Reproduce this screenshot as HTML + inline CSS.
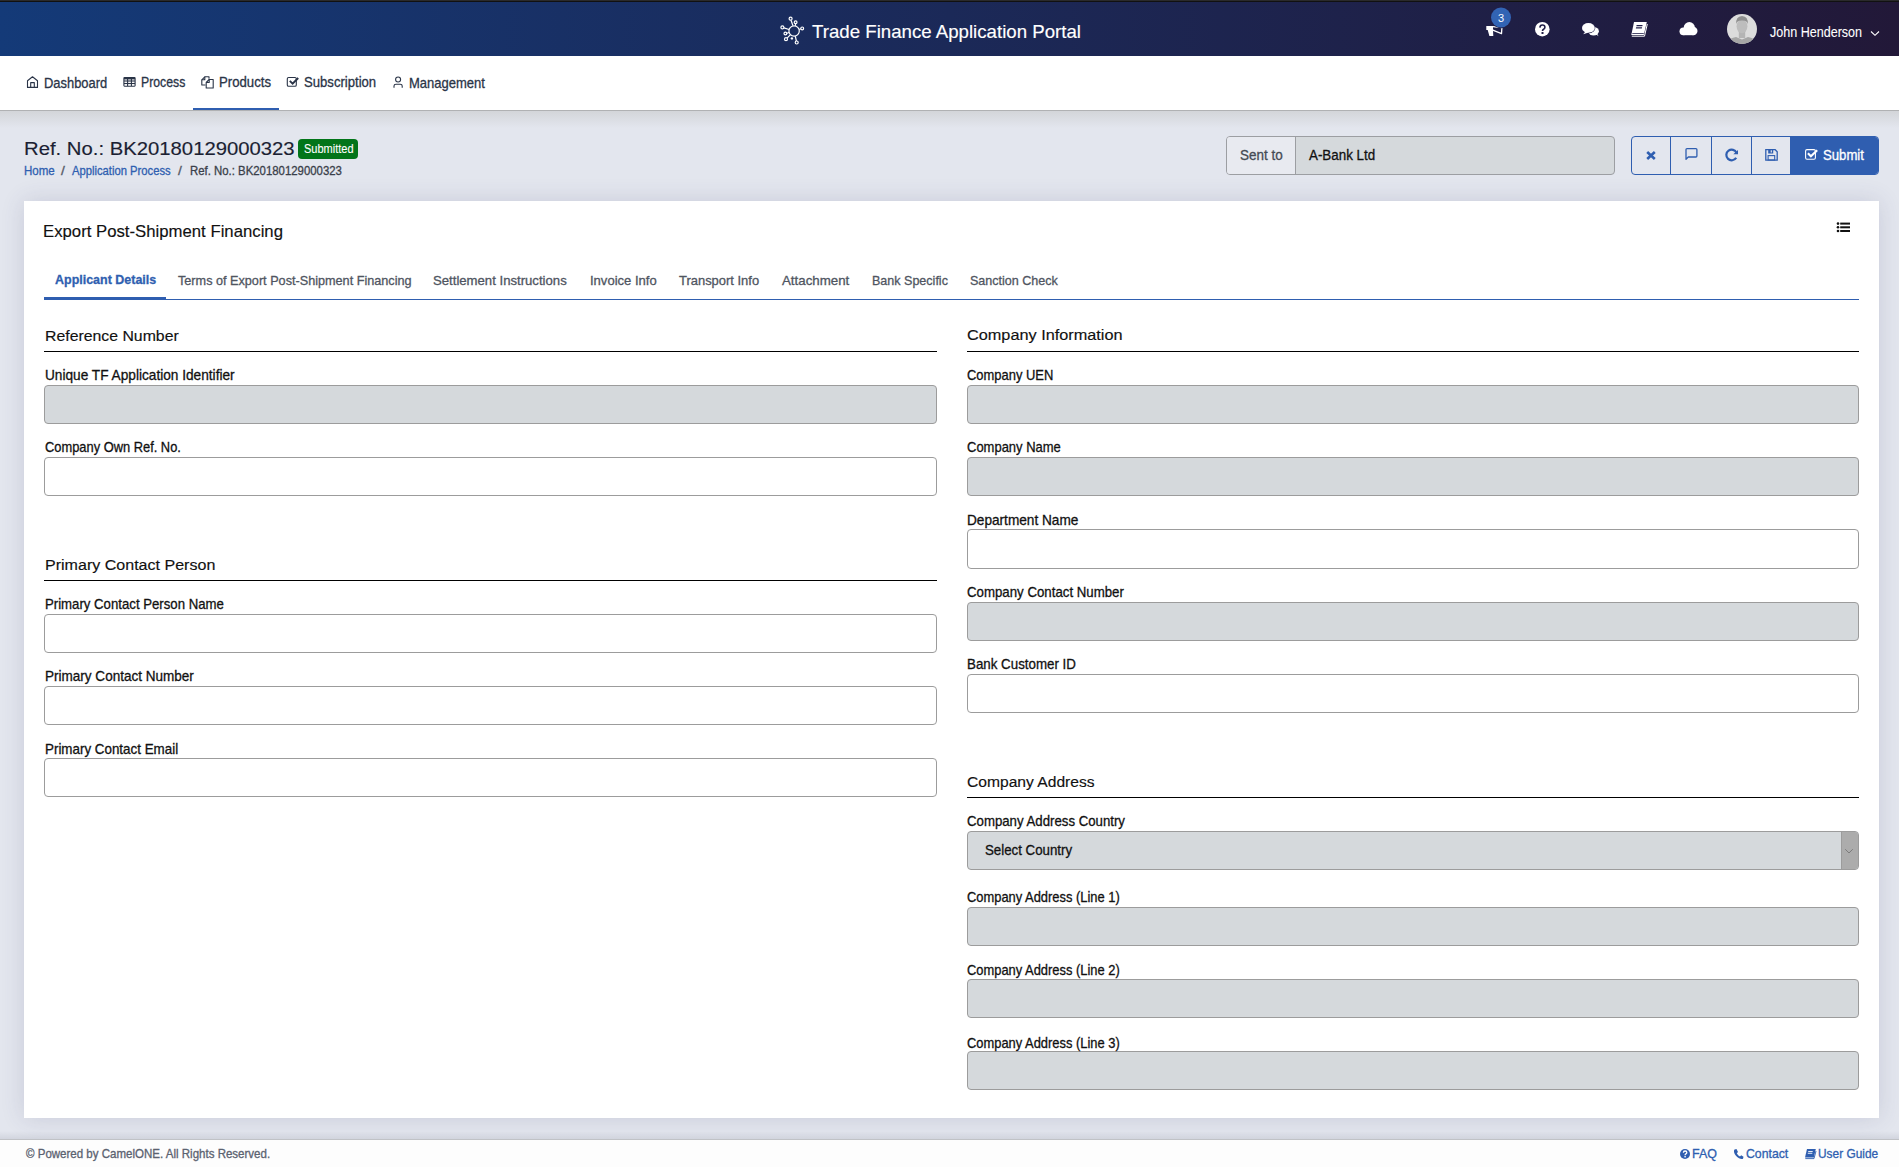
<!DOCTYPE html>
<html><head><meta charset="utf-8">
<style>
*{box-sizing:border-box;margin:0;padding:0}
html,body{width:1899px;height:1167px;overflow:hidden;background:#e3e6ee;font-family:"Liberation Sans",sans-serif}
.a{position:absolute}
.t{position:absolute;white-space:nowrap;line-height:1;transform-origin:0 0;-webkit-text-stroke:0.3px currentColor;font-family:"Liberation Sans",sans-serif}
#hdr{left:0;top:0;width:1899px;height:56px;background:linear-gradient(to right,#143a78,#221838);border-top:2px solid #111}
#hdrtop{left:0;top:0;width:1899px;height:1px;background:#2a2a2b}
#nav{left:0;top:56px;width:1899px;height:55px;background:#fff;border-bottom:1px solid #b0b1b3}
#navsh{left:0;top:111px;width:1899px;height:17px;background:linear-gradient(#d3d5d9,rgba(227,230,238,0))}
#card{left:24px;top:201px;width:1855px;height:917px;background:#fff;box-shadow:0 0 22px rgba(60,64,110,0.16)}
#foot{left:0;top:1139px;width:1899px;height:28px;background:#fdfdfd;border-top:1px solid #c0c2c6}
.inp{position:absolute;height:39px;border:1px solid #9c9c9c;border-radius:4px;background:#fff}
.dis{background:#d5d9dc}
.hr{position:absolute;height:1px;background:#000}
</style></head><body>
<div class="a" id="hdr"></div>
<div class="a" id="hdrtop"></div>
<div class="a" id="nav"></div>
<div class="a" id="navsh"></div>
<div class="a" style="left:193px;top:108px;width:86px;height:2px;background:#2f5eb0"></div>
<div class="a" id="card"></div>
<div class="a" style="left:0;top:1131px;width:1899px;height:8px;background:linear-gradient(rgba(120,124,140,0),rgba(120,124,140,0.16))"></div>
<div class="a" id="foot"></div>

<div class="a" style="left:298px;top:139px;width:60px;height:20px;background:#027519;border-radius:4px"></div>
<!-- sent to group -->
<div class="a" style="left:1226px;top:136px;width:389px;height:39px;border:1px solid #9c9ea2;border-radius:4px;background:#d5d9dc;overflow:hidden">
  <div class="a" style="left:0;top:0;width:69px;height:37px;background:#e8eaf0;border-right:1px solid #9c9ea2"></div>
</div>
<!-- button group -->
<div class="a" style="left:1631px;top:136px;width:248px;height:39px;border:1px solid #2f5eb0;border-radius:4px;overflow:hidden">
  <div class="a" style="left:38px;top:0;width:1px;height:37px;background:#2f5eb0"></div>
  <div class="a" style="left:79px;top:0;width:1px;height:37px;background:#2f5eb0"></div>
  <div class="a" style="left:119px;top:0;width:1px;height:37px;background:#2f5eb0"></div>
  <div class="a" style="left:158px;top:0;width:90px;height:37px;background:#2f5eb0"></div>
</div>

<!-- tabs -->
<div class="a" style="left:44px;top:299px;width:1815px;height:1px;background:#2f5eb0"></div>
<div class="a" style="left:44px;top:297px;width:122px;height:3px;background:#2f5eb0"></div>

<!-- hrs -->
<div class="hr" style="left:44px;top:351px;width:893px"></div>
<div class="hr" style="left:967px;top:351px;width:892px"></div>
<div class="hr" style="left:44px;top:580px;width:893px"></div>
<div class="hr" style="left:967px;top:797px;width:892px"></div>

<!-- inputs left -->
<div class="inp dis" style="left:44px;top:385px;width:893px"></div>
<div class="inp" style="left:44px;top:457px;width:893px"></div>
<div class="inp" style="left:44px;top:614px;width:893px"></div>
<div class="inp" style="left:44px;top:686px;width:893px"></div>
<div class="inp" style="left:44px;top:758px;width:893px"></div>
<!-- inputs right -->
<div class="inp dis" style="left:967px;top:385px;width:892px"></div>
<div class="inp dis" style="left:967px;top:457px;width:892px"></div>
<div class="inp" style="left:967px;top:529px;width:892px;height:40px"></div>
<div class="inp dis" style="left:967px;top:602px;width:892px"></div>
<div class="inp" style="left:967px;top:674px;width:892px"></div>
<div class="inp dis" style="left:967px;top:831px;width:892px;overflow:hidden">
  <div class="a" style="right:0;top:0;width:17px;height:37px;background:#acacac;border-left:1px solid #9c9c9c"></div>
</div>
<div class="inp dis" style="left:967px;top:907px;width:892px"></div>
<div class="inp dis" style="left:967px;top:979px;width:892px"></div>
<div class="inp dis" style="left:967px;top:1051px;width:892px"></div>

<svg class="a" style="left:0;top:0" width="1899" height="1167" viewBox="0 0 1899 1167">
 <!-- logo -->
 <g stroke="#fff" fill="none" stroke-width="1.2">
  <circle cx="794.1" cy="31" r="5.2"/>
  <line x1="793" y1="25.8" x2="791" y2="20.2"/><circle cx="790.6" cy="18.7" r="1.5"/>
  <line x1="795.5" y1="25.9" x2="795.5" y2="23.8"/><circle cx="795.6" cy="22.3" r="1.4"/>
  <line x1="789.1" y1="29.5" x2="783.9" y2="27.9"/><circle cx="782.4" cy="27.4" r="1.5"/>
  <line x1="799.2" y1="29.5" x2="800.8" y2="28.8"/><circle cx="802.2" cy="28.4" r="1.4"/>
  <line x1="789.1" y1="32.5" x2="786.9" y2="33.3"/><circle cx="785.4" cy="33.5" r="1.4"/>
  <line x1="790.5" y1="34.7" x2="787.1" y2="38.1"/><circle cx="786" cy="39.2" r="1.5"/>
  <line x1="795.3" y1="36.1" x2="796.4" y2="41"/><circle cx="796.7" cy="42.5" r="1.5"/>
 </g>
 <circle cx="791.9" cy="38.4" r="1.2" fill="#fff"/>

 <!-- megaphone -->
 <path d="M1486.3 26 L1493 26 L1493 30.4 L1493.3 35.9 L1489.4 35.9 L1487.7 30.1 L1486.3 30.1 Z" fill="#fff"/>
 <path d="M1492.8 26.7 L1501.9 27.6 L1501.5 33.6 L1492.8 30.2" stroke="#fff" stroke-width="1.3" fill="none" stroke-linejoin="round"/>
 <circle cx="1501" cy="17.5" r="10.7" fill="#211f48"/>
 <circle cx="1501" cy="17.5" r="10" fill="#3264b4"/>
 <!-- question circle -->
 <circle cx="1542.3" cy="29.2" r="7.3" fill="#fff"/>
 <path d="M1539.9 27.6 Q1540 25 1542.4 25 Q1544.9 25 1544.9 27.2 Q1544.9 28.5 1543.6 29.2 Q1542.5 29.8 1542.5 31" stroke="#201e47" stroke-width="1.6" fill="none"/>
 <rect x="1541.5" y="32" width="2" height="2" fill="#201e47"/>
 <!-- comments -->
 <ellipse cx="1593.6" cy="31.2" rx="5.3" ry="4.2" fill="#fff"/>
 <path d="M1595.5 34 L1598.6 36.2 L1596.2 32 Z" fill="#fff"/>
 <ellipse cx="1588.4" cy="27.9" rx="6.9" ry="5.4" fill="#211f48"/>
 <ellipse cx="1588.4" cy="27.9" rx="6.4" ry="4.9" fill="#fff"/>
 <path d="M1583.2 34.3 L1585.6 31.2 L1588.6 32.4 Z" fill="#fff"/>
 <!-- book -->
 <path d="M1634 22 L1646.8 22 L1643.8 35 L1631.3 35 Z" fill="#fff"/>
 <path d="M1631.8 36.2 L1644.5 36.2 L1647.3 24" stroke="#fff" stroke-width="1" fill="none"/>
 <rect x="1636.5" y="25" width="6" height="1.2" fill="#201e47" transform="skewX(-13) translate(5.9 0)"/>
 <rect x="1636" y="27.3" width="6" height="1.2" fill="#201e47" transform="skewX(-13) translate(6.4 0)"/>
 <path d="M1632.3 33.5 L1643.8 33.5" stroke="#201e47" stroke-width="0.8"/>
 <!-- cloud -->
 <g fill="#fff"><circle cx="1683.4" cy="31.3" r="3.9"/><circle cx="1689.3" cy="27.6" r="5.6"/><circle cx="1693.3" cy="31" r="4.2"/><rect x="1683.4" y="29" width="10" height="6.2"/></g>
 <!-- avatar -->
 <circle cx="1742" cy="29" r="15" fill="#dcdcdc"/>
 <clipPath id="av"><circle cx="1742" cy="29" r="15"/></clipPath>
 <g clip-path="url(#av)">
  <path d="M1725 48 Q1726 38.5 1736 37 L1742 39.5 L1748 37 Q1758 38.5 1759 48 Z" fill="#a6a6a6"/>
  <rect x="1738.8" y="31" width="6.4" height="7" fill="#b4b4b4"/>
  <ellipse cx="1742" cy="26.3" rx="5.4" ry="6.9" fill="#bdbdbd"/>
  <path d="M1736.3 24 Q1735.5 16.5 1742 16 Q1748.5 16.5 1747.7 24 Q1746.8 20.3 1742 20.6 Q1737.2 20.3 1736.3 24Z" fill="#8f8f8f"/>
 </g>
 <!-- chevron -->
 <path d="M1871 31.5 L1875 35.3 L1879 31.5" stroke="#fff" stroke-width="1.1" fill="none"/>

 <!-- nav icons -->
 <g stroke="#2a3447" fill="none" stroke-width="1.1" stroke-linejoin="round">
  <path d="M27.5 87.4 L27.5 80.7 L32.5 76.7 L37.5 80.7 L37.5 87.4 Z"/>
  <path d="M30.7 87.4 L30.7 82.6 L34.3 82.6 L34.3 87.4"/>
  <rect x="123.9" y="77.6" width="11.2" height="8.6" rx="0.6"/>
  <line x1="124" y1="78.6" x2="135" y2="78.6" stroke-width="1.6"/>
  <line x1="124" y1="81" x2="135" y2="81"/><line x1="124" y1="83.5" x2="135" y2="83.5"/>
  <line x1="127.6" y1="78" x2="127.6" y2="86"/><line x1="131.4" y1="78" x2="131.4" y2="86"/>
  <path d="M205.5 85 L201.8 85 L201.8 79.8 L204.8 76.8 L209 76.8 L209 78.8"/>
  <path d="M201.8 79.8 L204.8 79.8 L204.8 76.8"/>
  <path d="M206.2 88 L213.2 88 L213.2 79.5 L209.2 79.5 L206.2 82.5 Z"/>
  <path d="M206.2 82.5 L209.2 82.5 L209.2 79.5"/>
  <rect x="287.3" y="77.5" width="9" height="8.7" rx="1.3"/>
  <circle cx="398.1" cy="79.5" r="2.5"/>
  <path d="M394 87.7 L394 86 Q394 84.3 396 84.3 L400.2 84.3 Q402.2 84.3 402.2 86 L402.2 87.7"/>
 </g>
 <path d="M289.8 80.8 L292.6 83.6 L298.2 78" stroke="#2a3447" stroke-width="1.9" fill="none"/>

 <!-- button icons -->
 <path d="M1647.2 152 L1654.8 159 M1654.8 152 L1647.2 159" stroke="#2f5eb0" stroke-width="2.6"/>
 <path d="M1686 157.6 L1686 149.6 Q1686 148.6 1687 148.6 L1695.9 148.6 Q1696.9 148.6 1696.9 149.6 L1696.9 156 Q1696.9 157 1695.9 157 L1688.3 157 L1686 159.3 Z" stroke="#2f5eb0" stroke-width="1.3" fill="none" stroke-linejoin="round"/>
 <g transform="translate(0 1.1)"><path d="M1736.2 156.6 A5.3 5.3 0 1 1 1736.5 151.8" stroke="#2f5eb0" stroke-width="2.2" fill="none"/>
 <path d="M1733.3 153.2 L1738 153.2 L1738 148.8 Z" fill="#2f5eb0"/></g>
 <path d="M1765.8 149.7 L1775.2 149.7 L1777.2 151.7 L1777.2 160.1 L1765.8 160.1 Z" stroke="#2f5eb0" stroke-width="1.3" fill="none"/>
 <rect x="1768.2" y="149.7" width="5" height="3.8" fill="#2f5eb0"/>
 <rect x="1770.7" y="150.3" width="1.2" height="2.2" fill="#e3e6ee"/>
 <rect x="1768.1" y="155.6" width="6.6" height="4.4" stroke="#2f5eb0" stroke-width="1.1" fill="none"/>
 <rect x="1805.6" y="149.6" width="9.8" height="9.6" rx="1.4" stroke="#fff" stroke-width="1.1" fill="none"/>
 <path d="M1807.9 153.2 L1810.9 156.2 L1817.2 150.2" stroke="#fff" stroke-width="2.1" fill="none"/>

 <!-- list icon -->
 <g fill="#111">
  <circle cx="1838" cy="223.6" r="1.3"/><circle cx="1838" cy="227.3" r="1.3"/><circle cx="1838" cy="231" r="1.3"/>
  <rect x="1840.2" y="222.6" width="9.8" height="2"/><rect x="1840.2" y="226.3" width="9.8" height="2"/><rect x="1840.2" y="230" width="9.8" height="2"/>
 </g>

 <!-- select chevron -->
 <path d="M1845.2 849.2 L1849 853 L1852.8 849.2" stroke="#7c7c7c" stroke-width="1" fill="none"/>

 <!-- footer icons -->
 <circle cx="1685" cy="1154" r="5" fill="#2f5eb0"/>
 <path d="M1683.4 1152.8 Q1683.4 1151 1685.1 1151 Q1686.8 1151 1686.8 1152.5 Q1686.8 1153.4 1685.9 1153.8 Q1685.1 1154.2 1685.1 1155.2" stroke="#fff" stroke-width="1.3" fill="none"/>
 <rect x="1684.4" y="1156" width="1.4" height="1.4" fill="#fff"/>
 <path d="M1734.5 1149.5 L1736.5 1149 L1738 1152 L1736.8 1153.2 Q1737.8 1155.5 1740 1156.4 L1741.2 1155.2 L1743.5 1156.8 L1743 1158.8 Q1741.5 1159.6 1739 1158.3 Q1735 1156 1734 1152 Q1733.8 1150.3 1734.5 1149.5 Z" fill="#2f5eb0"/>
 <path d="M1807 1149 L1815.8 1149 L1813.8 1157.5 L1805 1157.5 Z" fill="#2f5eb0"/>
 <path d="M1805.3 1158.6 L1814 1158.6 L1816 1151" stroke="#2f5eb0" stroke-width="0.9" fill="none"/>
 <rect x="1808.2" y="1151" width="4.5" height="0.9" fill="#fff"/>
 <rect x="1807.8" y="1152.8" width="4.5" height="0.9" fill="#fff"/>
</svg>
<span id="t0" class="t" style="left:812.30px;top:23.52px;font-size:17.97px;transform:scaleX(1.0393);font-weight:400;color:#ffffff;-webkit-text-stroke:0.15px #fff">Trade Finance Application Portal</span>
<span id="t1" class="t" style="left:1770.10px;top:24.56px;font-size:14.64px;transform:scaleX(0.8577);font-weight:400;color:#ffffff;-webkit-text-stroke:0.1px #fff">John Henderson</span>
<span id="t2" class="t" style="left:1497.80px;top:13.48px;font-size:10.72px;transform:scaleX(1.0252);font-weight:400;color:#ffffff;-webkit-text-stroke:0">3</span>
<span id="t3" class="t" style="left:44.10px;top:76.18px;font-size:14.49px;transform:scaleX(0.8913);font-weight:400;color:#2a3447;">Dashboard</span>
<span id="t4" class="t" style="left:140.60px;top:74.63px;font-size:14.20px;transform:scaleX(0.8657);font-weight:400;color:#2a3447;">Process</span>
<span id="t5" class="t" style="left:219.10px;top:74.63px;font-size:14.20px;transform:scaleX(0.9281);font-weight:400;color:#2a3447;">Products</span>
<span id="t6" class="t" style="left:304.00px;top:74.53px;font-size:14.20px;transform:scaleX(0.9239);font-weight:400;color:#2a3447;">Subscription</span>
<span id="t7" class="t" style="left:409.00px;top:75.83px;font-size:14.20px;transform:scaleX(0.9169);font-weight:400;color:#2a3447;">Management</span>
<span id="t8" class="t" style="left:23.70px;top:138.92px;font-size:19.28px;transform:scaleX(1.0528);font-weight:400;color:#1b1f33;-webkit-text-stroke:0.15px currentColor">Ref. No.: BK20180129000323</span>
<span id="t9" class="t" style="left:304.10px;top:142.68px;font-size:12.03px;transform:scaleX(0.9159);font-weight:400;color:#ffffff;-webkit-text-stroke:0.1px #fff">Submitted</span>
<span id="t10" class="t" style="left:23.70px;top:164.73px;font-size:12.32px;transform:scaleX(0.9368);font-weight:400;color:#2f5fb0;">Home</span>
<span id="t11" class="t" style="left:61.20px;top:164.73px;font-size:12.32px;transform:scaleX(1.1285);font-weight:400;color:#555b66;">/</span>
<span id="t12" class="t" style="left:72.40px;top:164.73px;font-size:12.32px;transform:scaleX(0.9130);font-weight:400;color:#2f5fb0;">Application Process</span>
<span id="t13" class="t" style="left:178.00px;top:164.73px;font-size:12.32px;transform:scaleX(1.1285);font-weight:400;color:#555b66;">/</span>
<span id="t14" class="t" style="left:190.20px;top:164.73px;font-size:12.32px;transform:scaleX(0.9247);font-weight:400;color:#3a3f4a;">Ref. No.: BK20180129000323</span>
<span id="t15" class="t" style="left:1240.20px;top:147.58px;font-size:14.49px;transform:scaleX(0.9302);font-weight:400;color:#454b55;">Sent to</span>
<span id="t16" class="t" style="left:1309.30px;top:147.68px;font-size:14.49px;transform:scaleX(0.9231);font-weight:400;color:#111111;">A-Bank Ltd</span>
<span id="t17" class="t" style="left:1823.00px;top:148.80px;font-size:13.77px;transform:scaleX(0.9559);font-weight:400;color:#ffffff;">Submit</span>
<span id="t18" class="t" style="left:43.40px;top:222.82px;font-size:17.39px;transform:scaleX(0.9631);font-weight:400;color:#111111;-webkit-text-stroke:0.15px currentColor">Export Post-Shipment Financing</span>
<span id="t19" class="t" style="left:55.00px;top:273.96px;font-size:12.75px;transform:scaleX(0.9783);font-weight:700;color:#2f5fb0;">Applicant Details</span>
<span id="t20" class="t" style="left:177.90px;top:274.41px;font-size:13.04px;transform:scaleX(0.9714);font-weight:400;color:#4f5561;">Terms of Export Post-Shipment Financing</span>
<span id="t21" class="t" style="left:433.40px;top:274.41px;font-size:13.04px;transform:scaleX(1.0087);font-weight:400;color:#4f5561;">Settlement Instructions</span>
<span id="t22" class="t" style="left:589.50px;top:274.41px;font-size:13.04px;transform:scaleX(1.0002);font-weight:400;color:#4f5561;">Invoice Info</span>
<span id="t23" class="t" style="left:679.00px;top:274.41px;font-size:13.04px;transform:scaleX(0.9932);font-weight:400;color:#4f5561;">Transport Info</span>
<span id="t24" class="t" style="left:782.00px;top:274.41px;font-size:13.04px;transform:scaleX(1.0206);font-weight:400;color:#4f5561;">Attachment</span>
<span id="t25" class="t" style="left:872.10px;top:274.41px;font-size:13.04px;transform:scaleX(0.9614);font-weight:400;color:#4f5561;">Bank Specific</span>
<span id="t26" class="t" style="left:970.10px;top:274.41px;font-size:13.04px;transform:scaleX(0.9627);font-weight:400;color:#4f5561;">Sanction Check</span>
<span id="t27" class="t" style="left:44.60px;top:328.56px;font-size:14.64px;transform:scaleX(1.0823);font-weight:400;color:#111111;-webkit-text-stroke:0.15px currentColor">Reference Number</span>
<span id="t28" class="t" style="left:44.70px;top:367.73px;font-size:14.20px;transform:scaleX(0.9630);font-weight:400;color:#111111;">Unique TF Application Identifier</span>
<span id="t29" class="t" style="left:45.00px;top:439.93px;font-size:14.20px;transform:scaleX(0.9070);font-weight:400;color:#111111;">Company Own Ref. No.</span>
<span id="t30" class="t" style="left:44.60px;top:557.56px;font-size:14.64px;transform:scaleX(1.0972);font-weight:400;color:#111111;-webkit-text-stroke:0.15px currentColor">Primary Contact Person</span>
<span id="t31" class="t" style="left:44.60px;top:596.93px;font-size:14.20px;transform:scaleX(0.9296);font-weight:400;color:#111111;">Primary Contact Person Name</span>
<span id="t32" class="t" style="left:44.60px;top:668.93px;font-size:14.20px;transform:scaleX(0.9536);font-weight:400;color:#111111;">Primary Contact Number</span>
<span id="t33" class="t" style="left:44.60px;top:741.93px;font-size:14.20px;transform:scaleX(0.9432);font-weight:400;color:#111111;">Primary Contact Email</span>
<span id="t34" class="t" style="left:967.00px;top:328.36px;font-size:14.64px;transform:scaleX(1.1122);font-weight:400;color:#111111;-webkit-text-stroke:0.15px currentColor">Company Information</span>
<span id="t35" class="t" style="left:967.00px;top:367.73px;font-size:14.20px;transform:scaleX(0.9124);font-weight:400;color:#111111;">Company UEN</span>
<span id="t36" class="t" style="left:967.00px;top:439.93px;font-size:14.20px;transform:scaleX(0.9153);font-weight:400;color:#111111;">Company Name</span>
<span id="t37" class="t" style="left:966.80px;top:512.53px;font-size:14.20px;transform:scaleX(0.9605);font-weight:400;color:#111111;">Department Name</span>
<span id="t38" class="t" style="left:967.00px;top:584.93px;font-size:14.20px;transform:scaleX(0.9340);font-weight:400;color:#111111;">Company Contact Number</span>
<span id="t39" class="t" style="left:966.80px;top:656.93px;font-size:14.20px;transform:scaleX(0.9397);font-weight:400;color:#111111;">Bank Customer ID</span>
<span id="t40" class="t" style="left:967.00px;top:774.56px;font-size:14.64px;transform:scaleX(1.0679);font-weight:400;color:#111111;-webkit-text-stroke:0.15px currentColor">Company Address</span>
<span id="t41" class="t" style="left:967.00px;top:813.93px;font-size:14.20px;transform:scaleX(0.9317);font-weight:400;color:#111111;">Company Address Country</span>
<span id="t42" class="t" style="left:985.00px;top:843.23px;font-size:14.20px;transform:scaleX(0.9362);font-weight:400;color:#111111;">Select Country</span>
<span id="t43" class="t" style="left:967.00px;top:890.13px;font-size:14.20px;transform:scaleX(0.9090);font-weight:400;color:#111111;">Company Address (Line 1)</span>
<span id="t44" class="t" style="left:967.00px;top:962.63px;font-size:14.20px;transform:scaleX(0.9090);font-weight:400;color:#111111;">Company Address (Line 2)</span>
<span id="t45" class="t" style="left:967.00px;top:1035.53px;font-size:14.20px;transform:scaleX(0.9090);font-weight:400;color:#111111;">Company Address (Line 3)</span>
<span id="t46" class="t" style="left:25.60px;top:1148.15px;font-size:12.17px;transform:scaleX(0.9478);font-weight:400;color:#5b6270;">© Powered by CamelONE. All Rights Reserved.</span>
<span id="t47" class="t" style="left:1692.00px;top:1147.65px;font-size:12.17px;transform:scaleX(1.0243);font-weight:400;color:#2f5fb0;">FAQ</span>
<span id="t48" class="t" style="left:1745.60px;top:1147.65px;font-size:12.17px;transform:scaleX(1.0085);font-weight:400;color:#2f5fb0;">Contact</span>
<span id="t49" class="t" style="left:1817.80px;top:1147.65px;font-size:12.17px;transform:scaleX(0.9776);font-weight:400;color:#2f5fb0;">User Guide</span>
</body></html>
